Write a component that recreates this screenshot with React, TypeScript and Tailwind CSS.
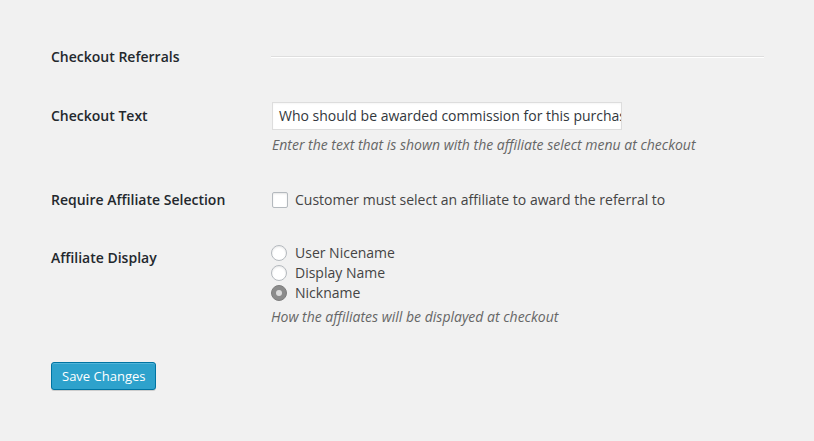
const font = "font-['Open_Sans',_'Liberation_Sans',_sans-serif]";

function Radio({ checked, label }: { checked?: boolean; label: string }) {
  return (
    <label className="flex h-[20px] items-center">
      <span
        className={`flex h-[16px] w-[16px] items-center justify-center rounded-full border ${
          checked ? "border-[#7e7e7e] bg-[#8c8c8c]" : "border-[#b4b9be] bg-white shadow-[inset_0_1px_2px_rgba(0,0,0,0.1)]"
        }`}
      >
        {checked && <span className="h-[6px] w-[6px] rounded-full bg-[#dcdcdc]" />}
      </span>
      <span className="ml-[8px]">{label}</span>
    </label>
  );
}

export default function App() {
  return (
    <div className={`${font} min-h-[441px] w-full bg-[#f1f1f1] pl-[51px] pt-[47px] text-[14px] leading-[20px] text-[#444]`}>
      {/* section heading */}
      <div className="flex h-[20px] items-center">
        <div className="w-[220px] font-semibold text-[#23282d]">Checkout Referrals</div>
        <div className="h-[2px] w-[493px] border-t border-b border-t-[#dedede] border-b-white" />
      </div>

      {/* checkout text */}
      <div className="mt-[35px] flex">
        <div className="w-[221px] pt-[4px] font-semibold text-[#23282d]">Checkout Text</div>
        <div>
          <div className="flex h-[28px] w-[350px] items-center overflow-hidden whitespace-nowrap border border-[#dddddd] bg-white pl-[6px] text-[#32373c] shadow-[inset_0_1px_2px_rgba(0,0,0,0.04)]">
            Who should be awarded commission for this purchase?
          </div>
          <div className="mt-[5px] italic text-[#666]">
            Enter the text that is shown with the affiliate select menu at checkout
          </div>
        </div>
      </div>

      {/* require selection */}
      <div className="mt-[35px] flex">
        <div className="w-[221px] font-semibold text-[#23282d]">Require Affiliate Selection</div>
        <label className="flex items-center">
          <span className="h-[16px] w-[16px] rounded-[2px] border border-[#b4b9be] bg-white shadow-[inset_0_1px_2px_rgba(0,0,0,0.1)]" />
          <span className="ml-[7px]">Customer must select an affiliate to award the referral to</span>
        </label>
      </div>

      {/* affiliate display */}
      <div className="mt-[33px] flex">
        <div className="w-[220px] pt-[5px] font-semibold text-[#23282d]">Affiliate Display</div>
        <div>
          <Radio label="User Nicename" />
          <Radio label="Display Name" />
          <Radio checked label="Nickname" />
          <div className="mt-[4px] italic text-[#666]">How the affiliates will be displayed at checkout</div>
        </div>
      </div>

      <button className="mt-[35px] h-[28px] rounded-[3px] border border-[#0074a2] bg-[#2ea2cc] px-[10px] text-[13px] leading-[26px] text-white shadow-[inset_0_1px_0_rgba(120,200,230,0.5),0_1px_0_rgba(0,0,0,0.15)]">
        Save Changes
      </button>
    </div>
  );
}
